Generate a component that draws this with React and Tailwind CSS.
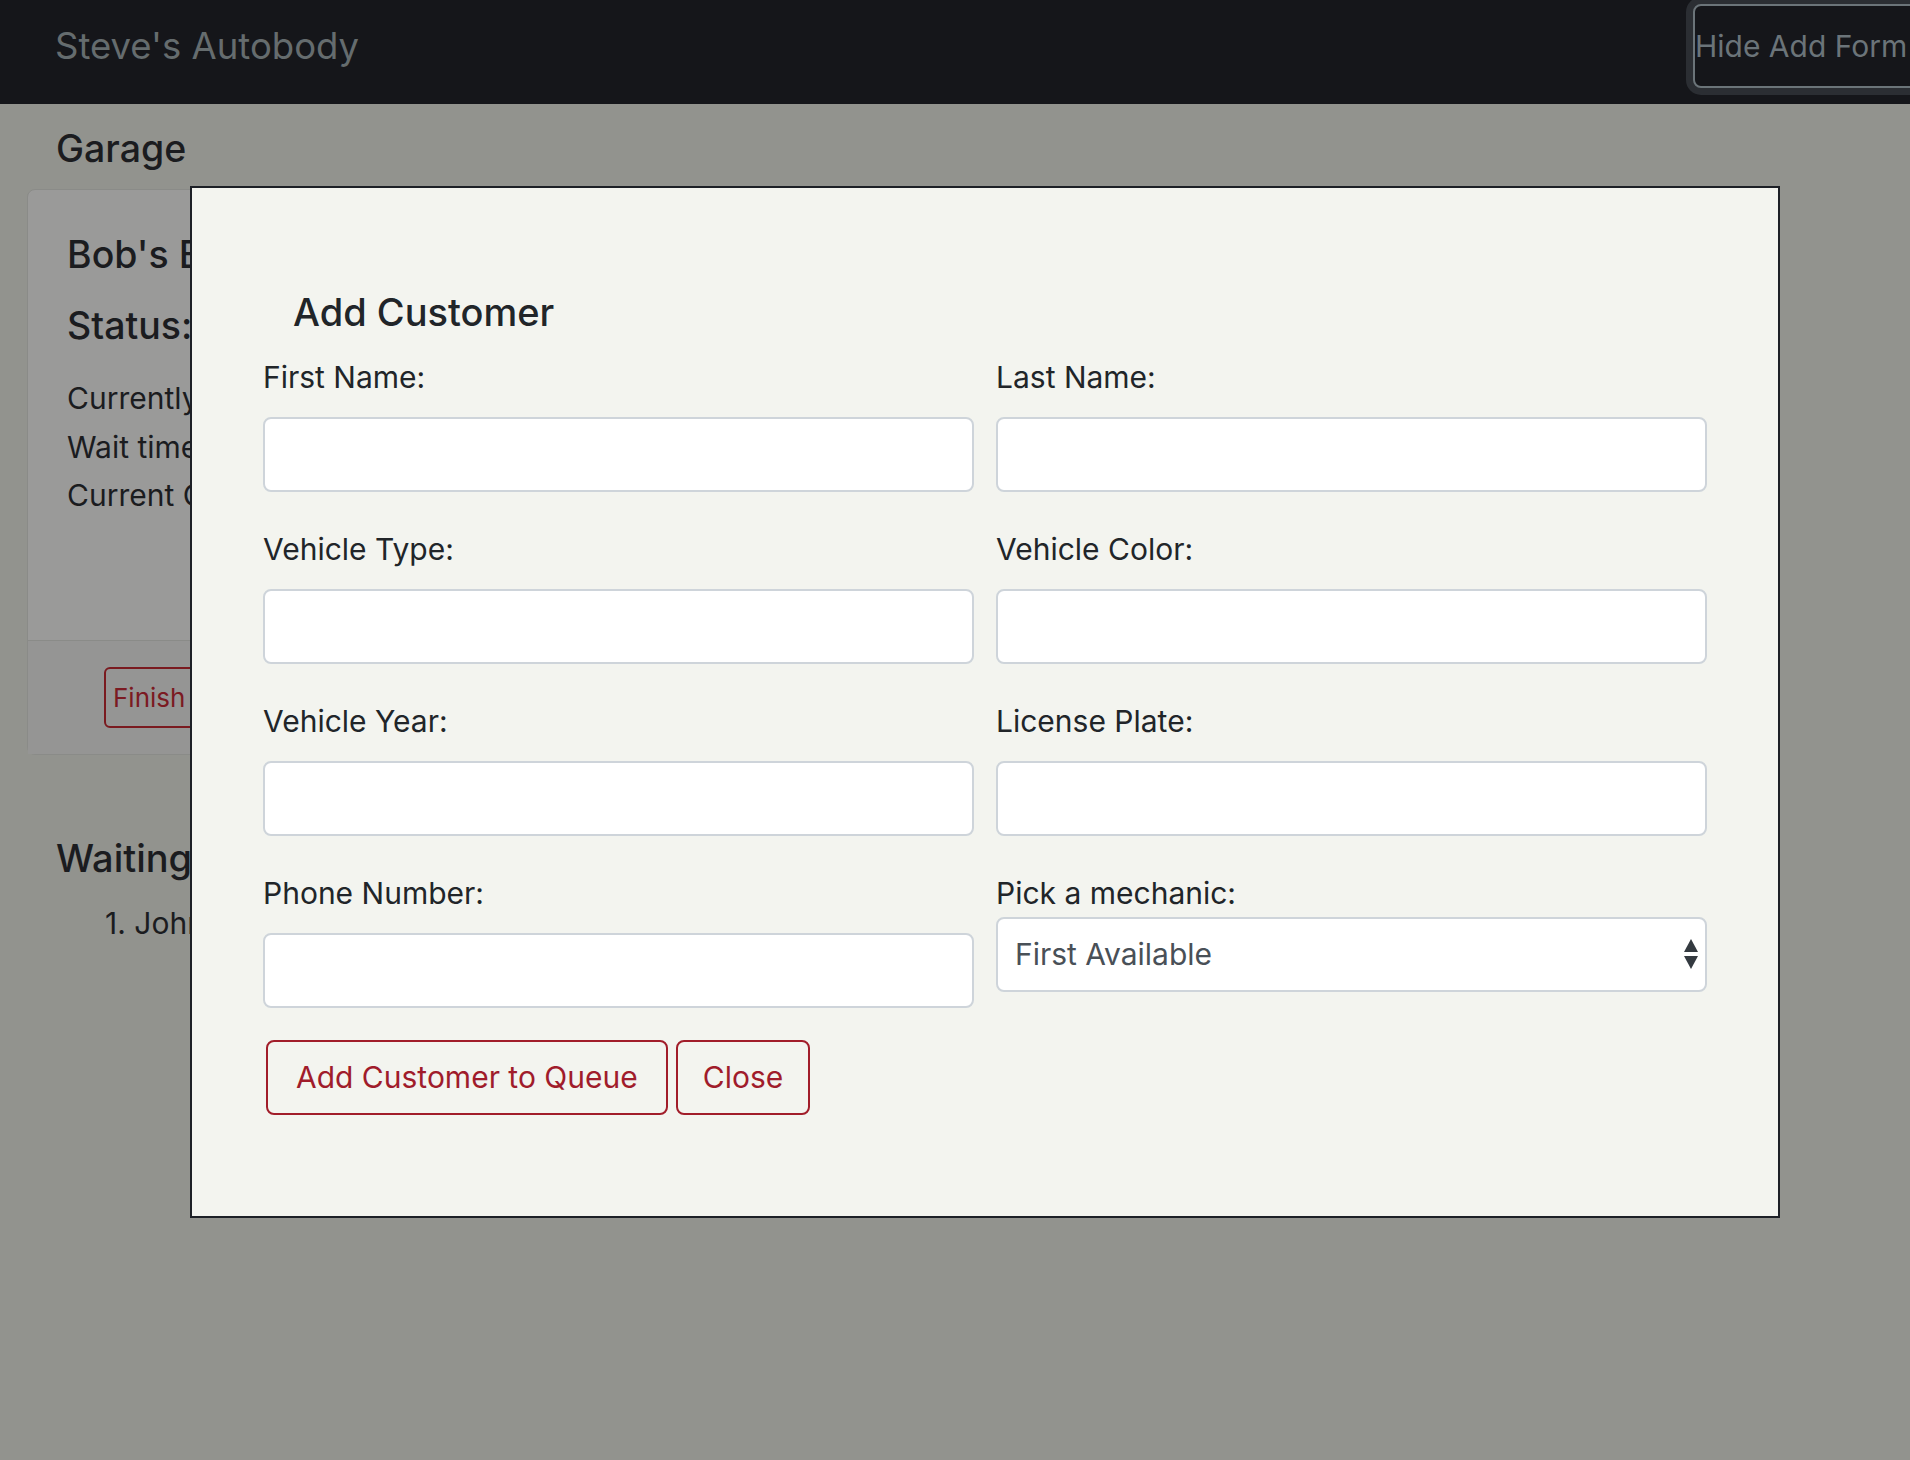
import React from 'react';

const fields = [
  ['First Name:', 'Last Name:'],
  ['Vehicle Type:', 'Vehicle Color:'],
  ['Vehicle Year:', 'License Plate:'],
];

const Field = ({ label }) => (
  <div>
    <label className="block text-[30px] leading-[45px] text-[#212529]">{label}</label>
    <input
      type="text"
      className="mt-[17px] block h-[75px] w-full rounded-lg border-2 border-[#ced4da] bg-white px-[17px] text-[30px] outline-none"
    />
  </div>
);

const App = () => {
  return (
    <div className="relative h-[1460px] w-full overflow-hidden bg-[#92938e] font-['Inter',sans-serif]">
      {/* Navbar */}
      <nav className="h-[104px] bg-[#15161a]">
        <div className="flex h-[92px] items-center justify-between pl-[55px]">
          <span className="text-[36.5px] leading-[45px] text-[#656c6e]">Steve's Autobody</span>
          <button className="mr-[-100px] flex h-[84px] w-[317px] items-center rounded-lg border-2 border-[#6b7479] bg-[#15161a] text-left text-[30px] text-[#6b7479] ring-[7px] ring-[#2b2e33]">
            Hide Add Form
          </button>
        </div>
      </nav>

      {/* Page behind the backdrop */}
      <main className="pl-[27px]">
        <h5 className="mt-[22px] pl-[29px] text-[37.5px] font-medium leading-[45px] text-[#1b1c1f]">Garage</h5>

        <div className="mt-[18px] w-[340px] whitespace-nowrap rounded-lg border border-[#8a8b88] bg-[#9a9a99]">
          <div className="px-[39px] pt-[42px] pb-[120px] text-[#1b1c1f]">
            <h5 className="w-fit text-[37.5px] font-medium leading-[45px]">Bob's Bay</h5>
            <h5 className="mt-[26px] w-fit text-[37.5px] font-medium leading-[45px]">Status:</h5>
            <div className="mt-[26px] text-[30px] leading-[48.5px]">
              <p className="w-fit">Currently</p>
              <p className="w-fit">Wait time</p>
              <p className="w-fit">Current Customer</p>
            </div>
          </div>
          <div className="border-t border-[#8a8b88] bg-[#959594] py-[26px] pl-[76px]">
            <button className="h-[61px] rounded-md border-2 border-[#7a1a1f] px-[7px] text-[26px] text-[#7b1a22]">
              Finish Job
            </button>
          </div>
        </div>

        <h4 className="mt-[81px] w-fit pl-[29px] text-[38px] font-medium leading-[45px] text-[#1b1c1f]">Waiting List</h4>
        <ol className="mt-[18px] w-fit pl-[78px] text-[30px] leading-[48px] text-[#1b1c1f]">
          <li>1. John Smith</li>
        </ol>
      </main>

      {/* Modal */}
      <div className="absolute left-[190px] top-[186px] h-[1032px] w-[1590px] border-2 border-[#1d2026] bg-[#f3f4ef] px-[71px] pt-[102px]">
        <h5 className="ml-[30px] text-[38px] font-medium leading-[45px] text-[#212529]">Add Customer</h5>

        <div className="mt-[20px] grid grid-cols-2 gap-x-[22px] gap-y-[35px]">
          {fields.map(([a, b]) => (
            <React.Fragment key={a}>
              <Field label={a} />
              <Field label={b} />
            </React.Fragment>
          ))}
          <Field label="Phone Number:" />
          <div>
            <label className="block text-[30px] leading-[45px] text-[#212529]">Pick a mechanic:</label>
            <div className="relative mt-[1px]">
              <select className="block h-[75px] w-full appearance-none rounded-lg border-2 border-[#ced4da] bg-white pl-[17px] text-[30px] text-[#495057] outline-none">
                <option>First Available</option>
              </select>
              <svg className="pointer-events-none absolute right-[9px] top-[22px]" width="14" height="30" viewBox="0 0 14 30">
                <path d="M7 0 L14 13 L0 13 Z" fill="#343a40" />
                <path d="M0 17 L14 17 L7 30 Z" fill="#343a40" />
              </svg>
            </div>
          </div>
        </div>

        <div className="ml-[3px] mt-[32px] flex gap-[8px]">
          <button className="h-[75px] rounded-lg border-2 border-[#a11d2a] px-[28px] text-[30px] text-[#a01c2b]">
            Add Customer to Queue
          </button>
          <button className="h-[75px] rounded-lg border-2 border-[#a11d2a] px-[25px] text-[30px] text-[#a01c2b]">
            Close
          </button>
        </div>
      </div>
    </div>
  );
};

export default App;
